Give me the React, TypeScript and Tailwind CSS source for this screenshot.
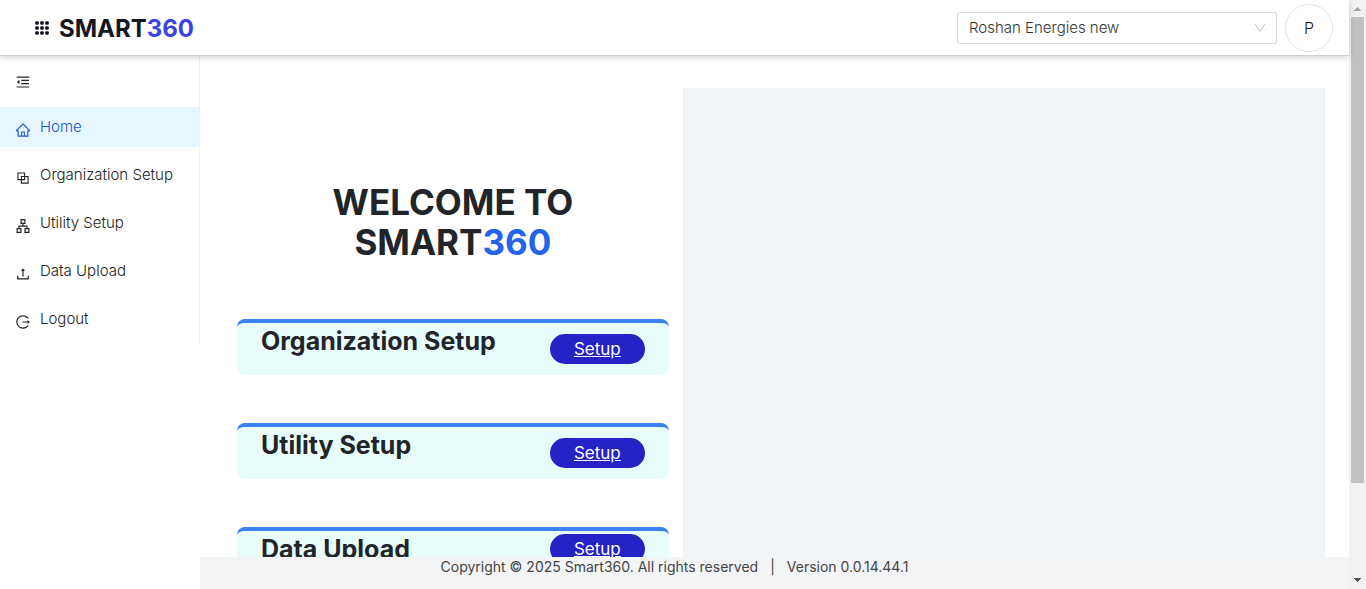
import {
  AiOutlineApartment,
  AiOutlineBlock,
  AiOutlineHome,
  AiOutlineLogout,
  AiOutlineMenuFold,
  AiOutlineUpload,
} from 'react-icons/ai';
import type { IconType } from 'react-icons';

const navItems: { label: string; icon: IconType; active?: boolean }[] = [
  { label: 'Home', icon: AiOutlineHome, active: true },
  { label: 'Organization Setup', icon: AiOutlineBlock },
  { label: 'Utility Setup', icon: AiOutlineApartment },
  { label: 'Data Upload', icon: AiOutlineUpload },
  { label: 'Logout', icon: AiOutlineLogout },
];

const cards = [
  { title: 'Organization Setup', buttonClass: 'mt-[11px]' },
  { title: 'Utility Setup', buttonClass: 'mt-[11px]' },
  { title: 'Data Upload', buttonClass: 'mt-[3px]' },
];

function AppsIcon() {
  return (
    <svg viewBox="0 0 14 14" className="size-3.5" fill="#14141f" aria-hidden="true">
      {[0.2, 5.2, 10.2].map((y) =>
        [0.2, 5.2, 10.2].map((x) => <rect key={`${x}-${y}`} x={x} y={y} width="3.6" height="3.6" rx="1.1" />),
      )}
    </svg>
  );
}

function Header() {
  return (
    <header className="relative z-10 flex h-14 shrink-0 items-center justify-between border-b border-[#d0d0d0] bg-white pr-4 pl-[35px] shadow-[0_2px_6px_rgba(0,0,0,0.16)]">
      <div className="flex items-center gap-2.5">
        <button type="button" aria-label="Apps">
          <AppsIcon />
        </button>
        <a href="#home" className="pt-0.5 text-2xl font-bold text-[#16161f]">
          SMART<span className="text-[#3a43e6]">360</span>
        </a>
      </div>
      <div className="flex items-center gap-2">
        <div className="relative w-80">
          <select
            aria-label="Organization"
            className="block h-8 w-full appearance-none rounded-xs border border-[#d9d9d9] bg-white px-[11px] pt-0.5 text-[15px] font-light text-[#333]"
          >
            <option>Roshan Energies new</option>
          </select>
          <svg viewBox="0 0 12 12" className="pointer-events-none absolute top-2.5 right-[11px] size-3" fill="none" stroke="#bfbfbf" aria-hidden="true">
            <path d="M1 2 6 9.500l5-7.500" />
          </svg>
        </div>
        <button type="button" className="size-12 rounded-full border border-[#dfe2e8] text-base font-light text-[#222]">
          P
        </button>
      </div>
    </header>
  );
}

function Sidebar() {
  return (
    <nav className="w-50 shrink-0 self-start border-r border-[#f0f0f0] pb-1">
      <button type="button" aria-label="Collapse menu" className="mt-[18px] mb-[17px] ml-[15px] block text-base text-[#222]">
        <AiOutlineMenuFold />
      </button>
      <ul className="flex flex-col gap-2">
        {navItems.map(({ label, icon: Icon, active }) => (
          <li key={label}>
            <a
              href="#"
              className={`flex h-10 items-center gap-[9px] pl-[15px] text-[15px] font-light ${active ? 'bg-[#e6f7ff] text-[#1d4ed8]' : 'text-[#222]'}`}
            >
              <Icon className="mt-1.5 size-4 shrink-0" />
              {label}
            </a>
          </li>
        ))}
      </ul>
    </nav>
  );
}

function Footer() {
  return (
    <footer className="flex h-8 shrink-0 justify-center gap-3 bg-[#f3f4f6] pr-50 text-sm text-[#444]">
      <span>Copyright © 2025 Smart360. All rights reserved</span>
      <span>|</span>
      <span>Version 0.0.14.44.1</span>
    </footer>
  );
}

function ScrollTrack() {
  return (
    <div className="flex w-[17px] shrink-0 flex-col items-center bg-[#f1f1f1]" aria-hidden="true">
      <svg viewBox="0 0 17 17" className="size-[17px]" fill="#a3a3a3">
        <path d="M8 7h1v1h1v1h1v1h1v1H5v-1h1V9h1V8h1z" />
      </svg>
      <div className="w-[13px] flex-[466] bg-[#c1c1c1]" />
      <div className="flex-[89]" />
      <svg viewBox="0 0 17 17" className="size-[17px]" fill="#505050">
        <path d="M5 6h7v1h-1v1h-1v1H9v1H8V9H7V8H6V7H5z" />
      </svg>
    </div>
  );
}

export default function App() {
  return (
    <div className="flex h-screen overflow-hidden bg-white font-[Inter,sans-serif]">
      <div className="flex min-w-0 flex-1 flex-col">
        <Header />
        <div className="flex min-h-0 flex-1">
          <Sidebar />
          <div className="flex min-w-0 flex-1 flex-col">
            <main className="grid min-h-0 flex-1 grid-cols-12 overflow-hidden px-6 pt-8">
              <section className="col-span-5 pt-[94px] pr-3.5 pl-[13px]">
                <h1 className="text-center text-[35px] leading-10 font-bold text-[#212529]">
                  WELCOME TO
                  <br />
                  SMART<span className="text-[#2563eb]">360</span>
                </h1>
                <div className="mt-[57px] flex flex-col gap-12">
                  {cards.map(({ title, buttonClass }) => (
                    <article key={title} className="flex h-14 items-start justify-between rounded-lg border-t-4 border-[#3b82f6] bg-[#e9fcfc] px-6">
                      <h2 className="mt-0.5 text-[25px] leading-8 font-bold text-[#212529]">{title}</h2>
                      <button
                        type="button"
                        className={`h-[30px] rounded-full bg-[#2522c6] px-6 text-[17px] leading-6 text-white underline ${buttonClass}`}
                      >
                        Setup
                      </button>
                    </article>
                  ))}
                </div>
              </section>
              <section className="col-span-7 bg-[#f0f4f9]" aria-label="Preview" />
            </main>
            <Footer />
          </div>
        </div>
      </div>
      <ScrollTrack />
    </div>
  );
}
